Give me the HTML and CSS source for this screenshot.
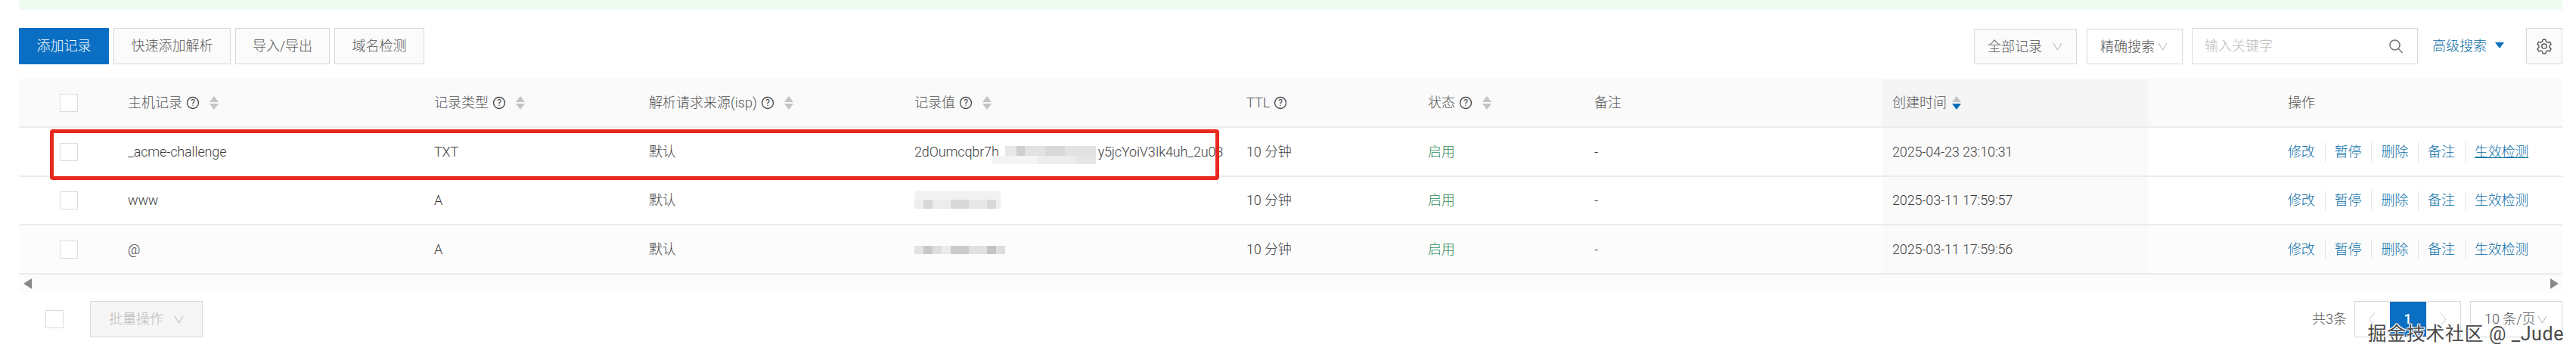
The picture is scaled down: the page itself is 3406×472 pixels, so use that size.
FILE: index.html
```html
<!DOCTYPE html>
<html lang="zh-CN">
  <head>
    <meta charset="UTF-8" />
    <title>解析设置</title>
    <link rel="stylesheet" href="styles.css">
  </head>
  <body>
    <div class="notice"></div>

    <div class="toolbar">
      <div class="toolbar-left">
        <button class="btn btn-primary btn-add">添加记录</button>
        <button class="btn btn-quick">快速添加解析</button>
        <button class="btn btn-import">导入/导出</button>
        <button class="btn btn-check">域名检测</button>
      </div>
      <div class="toolbar-right">
        <div class="select select-all">全部记录<svg class="chevron" viewBox="0 0 14 14"><path d="M1 2l6 10 6-10" /></svg></div>
        <div class="select select-exact">精确搜索<svg class="chevron" viewBox="0 0 14 14"><path d="M1 2l6 10 6-10" /></svg></div>
        <div class="search">
          <span>输入关键字</span>
          <svg class="search-icon" viewBox="0 0 20 20"><circle cx="8.500" cy="8.500" r="6.500" /><path d="M13 13l5.500 6" /></svg>
        </div>
        <a class="advanced">高级搜索<i class="tri-down"></i></a>
        <button class="btn btn-gear">
          <svg viewBox="0 0 24 24"><path d="M10 2.500h4l.7 3 2.200 1.200 3-.9 2 3.400-2.200 2.100v2.600l2.200 2.100-2 3.400-3-.9-2.200 1.200-.7 3h-4l-.7-3-2.200-1.200-3 .9-2-3.400 2.200-2.100v-2.600L2.100 9.200l2-3.400 3 .9 2.200-1.200z" /><circle cx="12" cy="12" r="3.500" /></svg>
        </button>
      </div>
    </div>

    <table class="records">
      <colgroup>
        <col class="col-check" /><col class="col-host" /><col class="col-type" /><col class="col-isp" /><col class="col-value" />
        <col class="col-ttl" /><col class="col-state" /><col class="col-remark" /><col class="col-created" /><col class="col-ops" />
      </colgroup>
      <thead>
        <tr>
          <th class="cell-check"><span class="checkbox"></span></th>
          <th>主机记录<svg class="help" viewBox="0 0 18 18"><circle cx="9" cy="9" r="7.500" /><text x="9" y="13">?</text></svg><svg class="sort" viewBox="0 0 12 18"><path class="up" d="M6 0l6 8H0z" /><path class="down" d="M6 18l6-8H0z" /></svg></th>
          <th>记录类型<svg class="help" viewBox="0 0 18 18"><circle cx="9" cy="9" r="7.500" /><text x="9" y="13">?</text></svg><svg class="sort" viewBox="0 0 12 18"><path class="up" d="M6 0l6 8H0z" /><path class="down" d="M6 18l6-8H0z" /></svg></th>
          <th>解析请求来源(isp)<svg class="help" viewBox="0 0 18 18"><circle cx="9" cy="9" r="7.500" /><text x="9" y="13">?</text></svg><svg class="sort" viewBox="0 0 12 18"><path class="up" d="M6 0l6 8H0z" /><path class="down" d="M6 18l6-8H0z" /></svg></th>
          <th>记录值<svg class="help" viewBox="0 0 18 18"><circle cx="9" cy="9" r="7.500" /><text x="9" y="13">?</text></svg><svg class="sort" viewBox="0 0 12 18"><path class="up" d="M6 0l6 8H0z" /><path class="down" d="M6 18l6-8H0z" /></svg></th>
          <th>TTL<svg class="help" viewBox="0 0 18 18"><circle cx="9" cy="9" r="7.500" /><text x="9" y="13">?</text></svg></th>
          <th>状态<svg class="help" viewBox="0 0 18 18"><circle cx="9" cy="9" r="7.500" /><text x="9" y="13">?</text></svg><svg class="sort" viewBox="0 0 12 18"><path class="up" d="M6 0l6 8H0z" /><path class="down" d="M6 18l6-8H0z" /></svg></th>
          <th>备注</th>
          <th class="cell-created">创建时间<svg class="sort sorted" viewBox="0 0 12 18"><path class="up" d="M6 0l6 8H0z" /><path class="down" d="M6 18l6-8H0z" /></svg></th>
          <th class="cell-ops">操作</th>
        </tr>
      </thead>
      <tbody>
        <tr>
          <td class="cell-check"><span class="checkbox"></span></td>
          <td>_acme-challenge</td>
          <td>TXT</td>
          <td>默认</td>
          <td>2dOumcqbr7h<span class="mosaic mosaic-long"></span>y5jcYoiV3Ik4uh_2u08</td>
          <td>10 分钟</td>
          <td class="enabled">启用</td>
          <td>-</td>
          <td class="cell-created">2025-04-23 23:10:31</td>
          <td class="cell-ops"><div class="ops"><a>修改</a><a>暂停</a><a>删除</a><a>备注</a><a class="hover">生效检测</a></div></td>
        </tr>
        <tr class="row-mid">
          <td class="cell-check"><span class="checkbox"></span></td>
          <td>www</td>
          <td>A</td>
          <td>默认</td>
          <td><span class="mosaic mosaic-short"></span></td>
          <td>10 分钟</td>
          <td class="enabled">启用</td>
          <td>-</td>
          <td class="cell-created">2025-03-11 17:59:57</td>
          <td class="cell-ops"><div class="ops"><a>修改</a><a>暂停</a><a>删除</a><a>备注</a><a>生效检测</a></div></td>
        </tr>
        <tr class="row-last">
          <td class="cell-check"><span class="checkbox"></span></td>
          <td>@</td>
          <td>A</td>
          <td>默认</td>
          <td><span class="mosaic mosaic-flat"></span></td>
          <td>10 分钟</td>
          <td class="enabled">启用</td>
          <td>-</td>
          <td class="cell-created">2025-03-11 17:59:56</td>
          <td class="cell-ops"><div class="ops"><a>修改</a><a>暂停</a><a>删除</a><a>备注</a><a>生效检测</a></div></td>
        </tr>
      </tbody>
    </table>

    <div class="scroll-strip">
      <i class="arrow-left"></i>
      <i class="arrow-right"></i>
    </div>

    <div class="footer">
      <div class="footer-left">
        <span class="checkbox"></span>
        <button class="btn btn-batch">批量操作<svg class="chevron" viewBox="0 0 14 14"><path d="M1 2l6 10 6-10" /></svg></button>
      </div>
      <div class="footer-right">
        <span class="total">共3条</span>
        <div class="pager">
          <span class="pager-nav"><svg viewBox="0 0 12 22"><path d="M10 2L2 11l8 9" /></svg></span>
          <span class="pager-current">1</span>
          <span class="pager-nav"><svg viewBox="0 0 12 22"><path d="M2 2l8 9-8 9" /></svg></span>
        </div>
        <div class="select select-size">10 条/页<svg class="chevron" viewBox="0 0 14 14"><path d="M1 2l6 10 6-10" /></svg></div>
      </div>
    </div>

    <!-- red box and watermark sit on top of the screenshot content -->
    <div class="highlight"></div>
    <div class="watermark">掘金技术社区 @ _Jude</div>
  </body>
</html>
```

FILE: styles.css
```css
* {
  padding: 0;
  margin: 0;
  box-sizing: border-box;
}

html,
body {
  height: 472px;
  overflow: hidden;
}

body {
  position: relative;
  padding: 0 18px 0 25px;
  background-color: #fff;
  color: #444;
  font-family: Roboto, "Noto Sans CJK SC", sans-serif;
  font-size: 18px;
  font-weight: 300;
  line-height: 26px;
}

.notice {
  height: 13px;
  background-color: #f0fbf1;
}

/* toolbar */

.toolbar {
  display: flex;
  justify-content: space-between;
  margin-top: 24px;
  height: 48px;
}

.toolbar-left,
.toolbar-right {
  display: flex;
  align-items: stretch;
}

.toolbar-left {
  gap: 6px;
}

.btn {
  display: flex;
  align-items: center;
  justify-content: center;
  border: 1px solid #d9d9d9;
  background-color: #fbfbfb;
  color: #555;
  font: inherit;
}

.btn-primary {
  border-color: #0a6fc2;
  background-color: #0a6fc2;
  color: #fff;
}

.btn-add {
  width: 119px;
}

.btn-quick {
  width: 155px;
}

.btn-import {
  width: 125px;
}

.btn-check {
  width: 119px;
}

.select {
  display: flex;
  align-items: center;
  margin-top: 1px;
  border: 1px solid #d9d9d9;
  color: #555;
}

.select-all {
  width: 136px;
  margin-right: 13px;
  padding-left: 17px;
  background-color: #fbfbfb;
  gap: 14px;
}

.select-exact {
  width: 127px;
  margin-right: 12px;
  padding-left: 17px;
  gap: 4px;
}

.chevron {
  width: 13px;
  height: 13px;
  fill: none;
  stroke: #aaa;
  stroke-width: 1;
}

.search {
  display: flex;
  align-items: center;
  justify-content: space-between;
  width: 299px;
  margin-right: 19px;
  padding: 0 18px 0 16px;
  border: 1px solid #d9d9d9;
  color: #bbb;
}

.search-icon {
  width: 20px;
  height: 20px;
  fill: none;
  stroke: #777;
  stroke-width: 1.5;
}

.advanced {
  display: flex;
  align-items: center;
  width: 124px;
  color: #0a6fa8;
}

.tri-down {
  width: 0;
  height: 0;
  margin: -2px 0 0 11px;
  border-left: 6px solid transparent;
  border-right: 6px solid transparent;
  border-top: 8px solid #0a6fb8;
}

.btn-gear {
  width: 48px;
}

.btn-gear svg {
  width: 22px;
  height: 24px;
  fill: none;
  stroke: #444;
  stroke-width: 1.4;
  stroke-linejoin: round;
}

/* table */

.records {
  width: 100%;
  margin-top: 19px;
  border-collapse: collapse;
  table-layout: fixed;
}

.col-check {
  width: 132px;
}

.col-host {
  width: 405px;
}

.col-type {
  width: 284px;
}

.col-isp {
  width: 351px;
}

.col-value {
  width: 439px;
}

.col-ttl {
  width: 240px;
}

.col-state {
  width: 220px;
}

.col-remark {
  width: 394px;
}

.col-created {
  width: 350px;
}

th {
  height: 64px;
  padding-left: 12px;
  border-bottom: 2px solid #ececec;
  background-color: #fafafa;
  color: #555;
  font-weight: 300;
  text-align: left;
  white-space: nowrap;
}

td {
  height: 65px;
  padding-left: 12px;
  border-bottom: 2px solid #ececec;
  color: #3d3d3d;
  letter-spacing: -0.15px;
  white-space: nowrap;
}

.row-mid td {
  height: 64px;
}

.row-last td {
  background-color: #fcfcfc;
}

.cell-check {
  padding-left: 54px;
}

.checkbox {
  display: block;
  width: 24px;
  height: 24px;
  border: 1px solid #dcdcdc;
  background-color: #fff;
}

th.cell-created {
  background-color: #f5f5f5;
}

td.cell-created,
.row-last td.cell-created {
  background-color: #fafafa;
}

th.cell-ops,
td.cell-ops {
  padding-left: 185px;
}

.enabled {
  color: #2e8b57;
}

.help {
  width: 18px;
  height: 18px;
  margin-left: 5px;
  vertical-align: -3px;
  fill: none;
  stroke: #444;
  stroke-width: 1.3;
}

.help text {
  fill: #444;
  stroke: none;
  font-size: 12px;
  font-weight: 400;
  text-anchor: middle;
}

.sort {
  width: 12px;
  height: 18px;
  margin-left: 13px;
  vertical-align: -3px;
}

.sort path {
  fill: #c4c4c4;
}

.sorted {
  margin-left: 7px;
}

.sorted .down {
  fill: #0a6fb8;
}

.ops {
  display: flex;
  color: #0a6fa8;
}

.ops a {
  padding-right: 13px;
  margin-right: 12px;
  border-right: 1px solid #e6e6e6;
}

.ops a:last-child {
  padding-right: 0;
  margin-right: 0;
  border-right: 0;
}

.ops .hover {
  text-decoration: underline;
}

/* pixelated parts of the record value, bars are 12px blocks like the original mosaic */

.mosaic {
  display: inline-block;
  background-repeat: no-repeat;
}

.mosaic-long {
  width: 137px;
  height: 24px;
  margin: 0 3px -10px -9px;
  background-image:
    linear-gradient(90deg, transparent 0 17px, #e8e8e8 17px 32px, #cfcfcf 32px 43px, #e2e2e2 43px 70px, #d8d8d8 70px 96px, #e2e2e2 96px 137px),
    linear-gradient(90deg, #f4f4f4 0 60px, #ededed 60px 110px, #e6e6e6 110px 137px);
  background-size: 100% 13px, 100% 11px;
  background-position: top, bottom;
}

.mosaic-short {
  width: 114px;
  height: 24px;
  margin-bottom: -5px;
  background-color: #f2f2f2;
  background-image: linear-gradient(90deg, #eee 0 12px, #d8d8d8 12px 24px, #ececec 24px 48px, #d9d9d9 48px 72px, #e8e8e8 72px 96px, #d8d8d8 96px 108px, #eee 108px 114px);
  background-size: 100% 12px;
  background-position: bottom;
}

.mosaic-flat {
  width: 120px;
  height: 11px;
  background-image: linear-gradient(90deg, #e2e2e2 0 12px, #c8c8c8 12px 24px, #dedede 24px 36px, #ebebeb 36px 48px, #cbcbcb 48px 72px, #e0e0e0 72px 96px, #c4c4c4 96px 108px, #dedede 108px 120px);
}

/* scroll strip */

.scroll-strip {
  display: flex;
  align-items: center;
  justify-content: space-between;
  height: 23px;
  padding: 0 5px 0 6px;
  background-color: #fcfcfc;
}

.arrow-left,
.arrow-right {
  width: 0;
  height: 0;
  border-top: 7px solid transparent;
  border-bottom: 7px solid transparent;
}

.arrow-left {
  border-right: 11px solid #888;
}

.arrow-right {
  border-left: 11px solid #888;
}

/* footer */

.footer {
  display: flex;
  justify-content: space-between;
  margin-top: 12px;
  height: 48px;
}

.footer-left,
.footer-right {
  display: flex;
  align-items: stretch;
}

.footer-left {
  align-items: center;
  gap: 35px;
  padding-left: 35px;
}

.btn-batch {
  gap: 14px;
  width: 149px;
  height: 48px;
  background-color: #f6f6f6;
  color: #bbb;
}

.total {
  align-self: center;
  margin-right: 10px;
  color: #555;
}

.pager {
  display: flex;
  width: 141px;
  margin-right: 12px;
  border: 1px solid #d9d9d9;
}

.pager-nav {
  display: flex;
  flex: 1;
  align-items: center;
  justify-content: center;
}

.pager-nav svg {
  width: 11px;
  height: 22px;
  fill: none;
  stroke: #c4c4c4;
  stroke-width: 1;
}

.pager-current {
  display: flex;
  width: 48px;
  align-items: center;
  justify-content: center;
  background-color: #0a6fc2;
  color: #fff;
  font-weight: 500;
}

.select-size {
  width: 122px;
  margin-top: 0;
  padding-left: 18px;
  gap: 2px;
}

/* overlays */

.highlight {
  position: absolute;
  left: 66px;
  top: 171px;
  width: 1546px;
  height: 67px;
  border: 5px solid #e8281e;
  border-radius: 4px;
}

.watermark {
  position: absolute;
  right: 16px;
  top: 428px;
  color: #4a4a4a;
  font-size: 25px;
  font-weight: 400;
  letter-spacing: 0.6px;
  line-height: 28px;
  white-space: nowrap;
  text-shadow: 1px 1px 0 #fff, -1px -1px 0 #fff, 1px -1px 0 #fff, -1px 1px 0 #fff;
}
```
